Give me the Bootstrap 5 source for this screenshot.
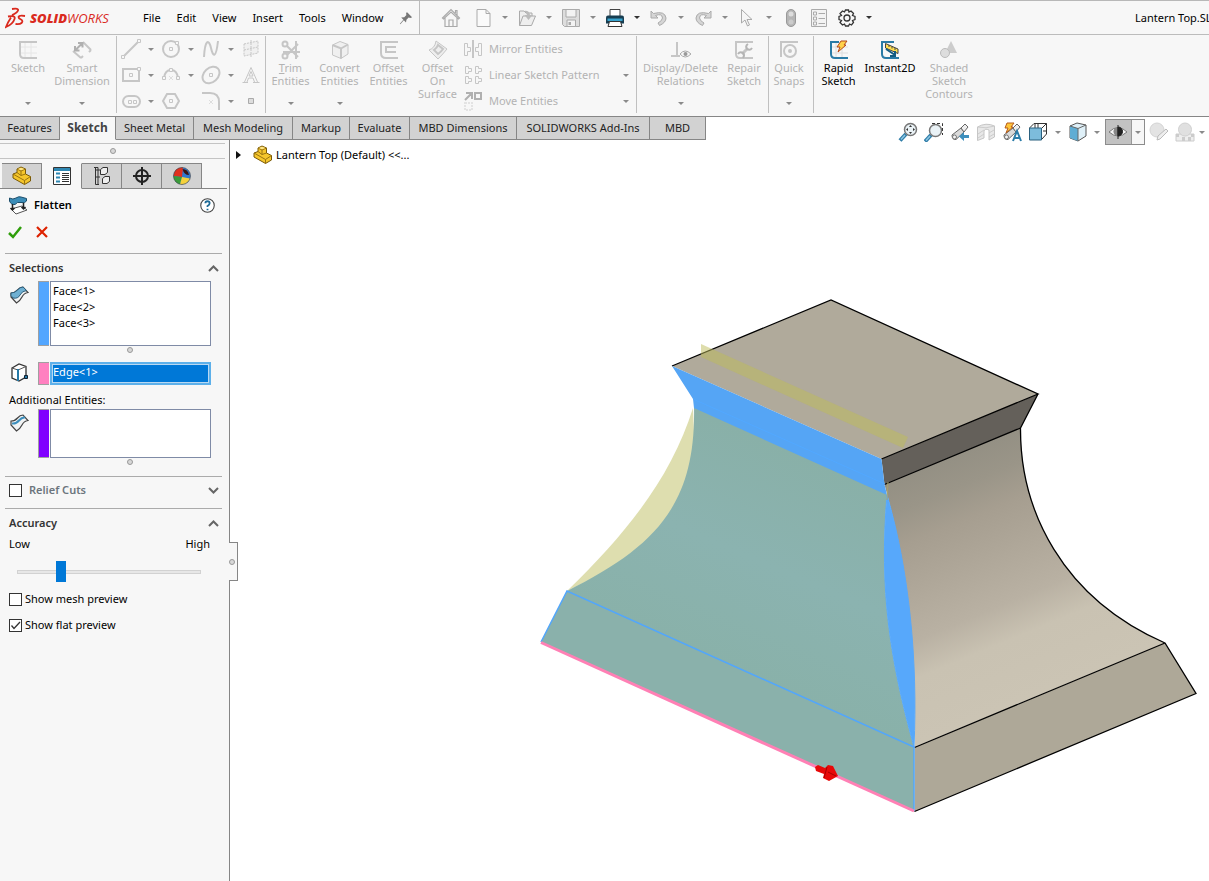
<!DOCTYPE html>
<html lang="en">
<head>
<meta charset="utf-8">
<meta name="viewport" content="width=device-width, initial-scale=1">
<title>SOLIDWORKS - Lantern Top</title>
<link href="https://cdn.jsdelivr.net/npm/bootstrap@5.3.0/dist/css/bootstrap.min.css" rel="stylesheet">
<style>
body{font-family:"Noto Sans","Open Sans",sans-serif;font-size:11px;line-height:16px;color:#000;background:#fff;overflow:hidden}
button{border:0;background:none;padding:0;color:inherit;line-height:inherit}
svg{display:block;flex:none}
.ico{width:20px;height:20px}
.chrome{background:#f7f7f7}
.titlebar{height:35px;border-top:1px solid #b8b8b8;border-bottom:1px solid #bcbcbc}
.brand{width:143px;padding-left:5px;color:#da2a1e}
.brand-name{font:italic 400 13px/16px "Open Sans",sans-serif}
.brand-name b{font-weight:800}
.menus{gap:16px}
.menus a{color:#000;text-decoration:none}
.pin{margin:0 6px 0 16px}
.quick{border-left:1px solid #bcbcbc;padding-left:21px}
.arrow{width:24px;height:20px;display:flex;align-items:center;justify-content:center;color:#8a8a8a;flex:none}
.arrow::after{content:"";border:3px solid transparent;border-top-color:currentColor;border-bottom:0}
.arrow.dark{color:#333}
.arrow.w20{width:20px}.arrow.w17{width:17px}.arrow.w14{width:14px}
.off{color:#b3b3b3}
.docname{width:74px;overflow:hidden;white-space:nowrap}
.ribbon{height:82px;border-bottom:1px solid #868686}
.group{border-right:1px solid #c0c0c0;margin-top:1px;margin-bottom:3px}
.group.first{padding:0 7px 0 1px}
.tool{display:flex;flex-direction:column;align-items:center;text-align:center;line-height:13px;padding-top:5px;width:49px;position:relative}
.group .tool{padding-top:4px}
.tool .ico{margin-bottom:1px}
.tool.w40{width:40px}.tool.w54{width:54px}.tool.w64{width:64px}.tool.w87{width:87px}
.tool.more::after{content:"";position:absolute;left:50%;bottom:8px;margin-left:-3px;border:3px solid transparent;border-top-color:#8a8a8a;border-bottom:0}
.sketchgrid{display:grid;grid-template-columns:repeat(3,40px) 24px;grid-auto-rows:26px;padding-left:4px}
.rowtools{width:174px;padding-left:1px}
.rowtools>div{height:26px}
.rowtools span{margin-left:6px}
.cmdtabs{display:grid;grid-template-columns:60px 56px 78px 99px 57px 60px 107px 133px 56px;height:23px}
.cmdtabs button{background:#d2d2d2;border-right:1px solid #868686;border-bottom:1px solid #868686;white-space:nowrap;color:#222}
.cmdtabs button.active{background:#f7f7f7;border-bottom-color:#f7f7f7;font-weight:700;font-size:12px;color:#444}
.viewtools{height:23px;overflow:visible;padding-top:1px}
.viewtools .ico{margin-right:6px}
.viewtools .tight .ico{margin-right:0}
.eye{border:1px solid #8c8c8c;background:#c2c2c2;height:26px;width:40px;flex:none;margin-top:1px}
.eye .ico{margin:0 3px 0 2px}
.eye .arrow{background:#f7f7f7;height:24px;width:13px;border-left:1px solid #999}
.side{width:230px;border-right:1px solid #868686;position:relative;flex:none}
.grip{height:16px;border-top:1px solid #c4c4c4;border-bottom:1px solid #c4c4c4;margin:3px 4px 0 0}
.dot{width:6px;height:6px;border:1px solid #999;border-radius:50%;background:#d8d8d8;display:block}
.ptabs{border-bottom:1px solid #868686;padding:4px 0 0 2px;margin-right:2px;height:30px}
.ptabs button{width:40px;height:26px;background:#d2d2d2;border:1px solid #868686;border-left:0;display:flex;align-items:center;justify-content:center}
.ptabs button.active{background:#f7f7f7;border-top-color:#f7f7f7;border-bottom-color:#f7f7f7}
.feature-title{padding:6px 14px 0 8px;gap:6px}
.confirm{padding:7px 0 11px 8px;gap:14px}
.sect{border-top:1px solid #ababab;margin:0 7px 0 5px;padding:1px 0 0 4px}
.sect.slim{padding:0 0 5px 4px}
.sect h2{font-size:11px;font-weight:600;margin:0;line-height:16px;color:#333}
.head{padding-right:3px;height:26px;gap:7px}
.pick{display:grid;grid-template-columns:29px 12px 161px}
.swatch{border:1px solid #a0a0a0;border-right:0;margin-right:1px}
.sw-blue{background:#52a6ff}.sw-pink{background:#ff80c0}.sw-violet{background:#8000ff}
.pickbox{border:1px solid #7f8ba6;background:#fff;padding:1px 2px}
.tall{height:65px}.mid{height:49px}
.pickbox.sel{border:2px solid #5db0ea;background:#0078d7;color:#fff;height:23px;padding:0 1px;outline:1px solid #b9d8f2;outline-offset:-3px}
.dotrow{display:flex;justify-content:center;padding-left:29px;height:8px;padding-top:1px}
.extra{padding:7px 0 1px}
.selections{padding-bottom:10px}
.tick{appearance:none;width:13px;height:13px;border:1px solid #333;background:#fff;margin:0;flex:none;border-radius:0}
.tick:checked{background:#fff url("data:image/svg+xml,%3Csvg xmlns='http://www.w3.org/2000/svg' viewBox='0 0 11 11'%3E%3Cpath d='M1.5 5.5 4 8.500 10 2' fill='none' stroke='%23333' stroke-width='1.300'/%3E%3C/svg%3E")}
.checks{display:grid;gap:10px}
.checks>div{gap:3px}
.accuracy{appearance:none;width:184px;height:22px;background:none;margin:9px 0 8px 8px;display:block}
.accuracy::-webkit-slider-runnable-track{height:4px;background:#e7e7e7;border:1px solid #d2d2d2}
.accuracy::-webkit-slider-thumb{appearance:none;width:10px;height:21px;margin-top:-10px;background:#0078d7}
.handle{position:absolute;right:-9px;top:402px;width:9px;height:39px;background:#f7f7f7;border:1px solid #868686;border-left:0;display:flex;align-items:center}
.stage{position:relative;min-width:0;min-height:741px}
.stage>svg{width:100%;height:100%;position:absolute}
.tree{position:absolute;left:6px;top:5px;z-index:1}
.tree .ico{margin:0 3px 0 12px}
.sk{fill:none;stroke:#c6c6c6;stroke-width:2}
.thin{stroke-width:1}
</style>
</head>
<body class="d-flex flex-column min-vh-100">
<svg width="0" height="0" class="position-absolute" aria-hidden="true">
<symbol id="part" viewBox="0 0 20 20"><path d="M1 8 5 6.500V3L9 1 13.500 3V8L18.500 10.500V15L12.500 18.500 1 12Z" fill="#f5c62c" stroke="#7a5a08"/><path d="M5 3 9 5 13.500 3M9 5V9.500L5 6.500M1 8 12.500 14.500 18.500 10.500M12.500 14.500V18.500M9 9.500 13.500 8" fill="none" stroke="#9a7410"/><path d="M6 3 9 1.700 12.300 3 9 4.300Z" fill="#ffe78c"/></symbol>
<symbol id="mag" viewBox="0 0 20 20"><path d="M2 18.500 8 12" stroke="#2f7da8" stroke-width="4"/><path d="M3 17.500 7 13" stroke="#8cc6e4" stroke-width="1.500"/><circle cx="12.500" cy="7.500" r="6" fill="#eaf2f6" stroke="#777" stroke-width="1.500"/></symbol>
<symbol id="scope" viewBox="0 0 20 20"><path d="M2 13 11 6 14 10 6 17.500Q2 18 2 13Z" fill="#dadada" stroke="#666"/><path d="M11 6 15 2 18 5 14 10Z" fill="#eee" stroke="#666"/><circle cx="4.500" cy="15" r="2" fill="#f5f5f5" stroke="#777"/></symbol>
<symbol id="surf" viewBox="0 0 20 20"><path d="M2 8Q6 8 8.500 5T14 2L19 7.500Q15 8 13 12T7.500 18L2 12Z" fill="#f1f3f4" stroke="#444" stroke-width="1.200"/></symbol>
</svg>

<header class="titlebar chrome d-flex align-items-center">
 <div class="brand d-flex align-items-center">
  <svg width="21" height="22" viewBox="0 0 21 22" fill="none" stroke="#da2a1e" stroke-width="1.800"><path d="M7 2Q14 1 13 3.500Q12 6 7 8M3 9.500Q11 8 9.500 12Q8 17 1 20Q3 15 6 10.500M20 9Q14 8 13.500 10Q13.500 11.500 16 12.500Q18.500 14 16.500 16Q15 17.500 10.500 17"/></svg>
  <span class="brand-name ms-1"><b>SOLID</b>WORKS</span>
 </div>
 <nav class="menus d-flex align-items-center"><a href="#">File</a><a href="#">Edit</a><a href="#">View</a><a href="#">Insert</a><a href="#">Tools</a><a href="#">Window</a></nav>
 <button class="pin" aria-label="Pin menu"><svg width="14" height="16" viewBox="0 0 16 16"><path d="M9 1 15 7 13 8 11 7.500 8.500 10 8 13 5.500 10.500 1.500 15 1 14.500 5 10 2.500 7.500 6 7 8.500 4.500 8 3Z" fill="#777"/></svg></button>
 <div class="quick align-self-stretch d-flex align-items-center">
  <button aria-label="Home"><svg class="ico" viewBox="0 0 20 20"><path d="M1.500 10 10 1.500 18.500 10 17.500 11 10 4 2.500 11ZM4 10V18.500H16V10M8 18V12H12V18M14.500 5V2.500H16V7" fill="none" stroke="#aaa" stroke-width="1.200"/></svg></button>
  <button class="ms-2 ps-1" aria-label="New"><svg class="ico" viewBox="0 0 20 20"><path d="M4 1.500H13L17 5.500V18.500H4ZM13 1.500V5.500H17" fill="#fafafa" stroke="#aaa"/></svg></button><button class="arrow" aria-label="New options"></button>
  <button aria-label="Open"><svg class="ico" viewBox="0 0 20 20"><path d="M2.500 17.500V3H7L9 5H15V8M2.500 17.500 6 8H18.500L14.500 17.500Z" fill="#eee" stroke="#aaa"/><path d="M7 3Q12 2 13 7H15.500L11.500 12 7.500 7H10Q10 5 7 3Z" fill="#bbb"/></svg></button><button class="arrow" aria-label="Open options"></button>
  <button aria-label="Save"><svg class="ico" viewBox="0 0 20 20"><path d="M1.500 1.500H18.500V18.500H3.500L1.500 16.500Z" fill="#ddd" stroke="#aaa"/><path d="M5 1.500H15V9H5ZM6 12H14.500V18.500H6Z" fill="#f3f3f3" stroke="#aaa"/><path d="M7.500 14H10V17H7.500Z" fill="#aaa"/></svg></button><button class="arrow" aria-label="Save options"></button>
  <button aria-label="Print"><svg class="ico" viewBox="0 0 20 20"><path d="M5 8V1.500H15V8" fill="#fff" stroke="#444"/><path d="M1 9.500Q1 7.500 3 7.500H17Q19 7.500 19 9.500V15.500H1Z" fill="#173d50"/><path d="M2.500 10.500H17.500V13H2.500Z" fill="#39a3cd"/><path d="M4.500 13.500H15.500L17 18.500H3Z" fill="#fff" stroke="#333"/></svg></button><button class="arrow dark" aria-label="Print options"></button>
  <button aria-label="Undo"><svg class="ico" viewBox="0 0 20 20"><path d="M2 3V10H9L6.500 7.500Q13 5 13.500 10Q13 13 9 15L10.500 17.500Q17 14.500 17 10Q16 2.500 4.500 5.500Z" fill="#d5d5d5" stroke="#aaa"/></svg></button><button class="arrow" aria-label="Undo options"></button>
  <button aria-label="Redo"><svg class="ico" viewBox="0 0 20 20"><path d="M18 3V10H11L13.500 7.500Q7 5 6.500 10Q7 13 11 15L9.500 17.500Q3 14.500 3 10Q4 2.500 15.500 5.500Z" fill="#d5d5d5" stroke="#aaa"/></svg></button><button class="arrow" aria-label="Redo options"></button>
  <button aria-label="Select"><svg class="ico" viewBox="0 0 20 20"><path d="M4.500 1.500V15L8 12 10.500 18 12.500 17 10 11.500H15Z" fill="#f5f5f5" stroke="#aaa"/></svg></button><button class="arrow" aria-label="Select options"></button>
  <button aria-label="Rebuild"><svg class="ico" viewBox="0 0 20 20"><rect x="5.500" y="1.500" width="9" height="17" rx="4.500" fill="#b5b5b5" stroke="#999"/><circle cx="10" cy="6" r="2.500" fill="#ddd"/><circle cx="10" cy="14" r="2.500" fill="#ccc"/></svg></button>
  <button class="mx-1 px-1" aria-label="File properties"><svg class="ico" viewBox="0 0 20 20"><path d="M2.500 1.500H17.500V18.500H2.500ZM4.500 4H7.500V7H4.500ZM4.500 9H7.500V12H4.500ZM4.500 14H7.500V17H4.500ZM9.500 5.500H16M9.500 10.500H16M9.500 15.500H16" fill="#f3f3f3" stroke="#aaa"/></svg></button>
  <button aria-label="Options"><svg class="ico" viewBox="0 0 20 20" fill="none" stroke="#333" stroke-width="1.300"><path d="M8.500 2H11.500L12 4 14 3 16.500 5.500 15.500 7.500 18 8.500V11.500L15.500 12.500 16.500 14.500 14.500 17 12.500 16 11.500 18H8.500L7.500 16 5.500 17 3 14.500 4.500 12.500 2 11.500V8.500L4.500 7.500 3 5.500 5.500 3 7.500 4Z"/><circle cx="10" cy="10" r="3"/></svg></button><button class="arrow dark" aria-label="Options menu"></button>
 </div>
 <div class="docname ms-auto">Lantern Top.SL</div>
</header>

<div class="ribbon chrome d-flex">
 <div class="group first d-flex off">
  <button class="tool more w54"><svg class="ico sk" viewBox="0 0 20 20"><path class="thin" stroke="#e6e6e6" d="M7 2V18M13 2V18M3 7H19M3 13H19"/><path d="M19 2H2V14Q2 18 6 18H19"/></svg>Sketch</button>
  <button class="tool more w54"><svg class="ico sk" viewBox="0 0 20 20"><path d="M1 11 9 18M11 2 19 10M9 18 11 16M19 10 17 12"/><path stroke="#b0b0b0" d="M3 10.500 10.500 3M6 3H10.500V7.500M3 6V10.500H7.500"/></svg>Smart Dimension</button>
 </div>
 <div class="group sketchgrid off">
  <div class="d-flex align-items-center"><button aria-label="Line"><svg class="ico sk" viewBox="0 0 20 20"><path d="M3 17 17 3"/><path class="thin" fill="#f7f7f7" d="M.5 16.500H3.500V19.500H.5ZM16.500.5H19.500V3.500H16.500Z"/></svg></button><button class="arrow w20" aria-label="Line options"></button></div>
  <div class="d-flex align-items-center"><button aria-label="Circle"><svg class="ico sk" viewBox="0 0 20 20"><circle cx="10" cy="10" r="8"/><path class="thin" fill="#f7f7f7" d="M8.500 8.500H11.500V11.500H8.500ZM14.500 2.500H17.500V5.500H14.500Z"/></svg></button><button class="arrow w20" aria-label="Circle options"></button></div>
  <div class="d-flex align-items-center"><button aria-label="Spline"><svg class="ico sk" viewBox="0 0 20 20"><path d="M3 18C4 0 8 0 10 9S15 20 17 2"/></svg></button><button class="arrow w20" aria-label="Spline options"></button></div>
  <div class="d-flex align-items-center"><button aria-label="Plane"><svg class="ico sk" viewBox="0 0 20 20" stroke-dasharray="2 1"><path class="thin" fill="#f0f0f0" d="M3 5 17 2V14L3 17ZM10 1V18M3 11 17 8"/></svg></button></div>
  <div class="d-flex align-items-center"><button aria-label="Rectangle"><svg class="ico sk" viewBox="0 0 20 20"><path d="M2 4H18V16H2Z"/><path class="thin" fill="#f7f7f7" d="M8.500 8.500H11.500V11.500H8.500ZM16.500 2.500H19.500V5.500H16.500Z"/></svg></button><button class="arrow w20" aria-label="Rectangle options"></button></div>
  <div class="d-flex align-items-center"><button aria-label="Arc"><svg class="ico sk" viewBox="0 0 20 20"><path d="M3 13Q4 5 10 5T17 13"/><path class="thin" fill="#f7f7f7" d="M1.500 11.500H4.500V14.500H1.500ZM8.500 3.500H11.500V6.500H8.500ZM15.500 11.500H18.500V14.500H15.500Z"/><path class="thin" stroke="#ddd" d="M8 11 12 15M12 11 8 15"/></svg></button><button class="arrow w20" aria-label="Arc options"></button></div>
  <div class="d-flex align-items-center"><button aria-label="Ellipse"><svg class="ico sk" viewBox="0 0 20 20"><ellipse cx="10" cy="10" rx="9.500" ry="7" transform="rotate(-42 10 10)"/><path class="thin" d="M8.500 8.500H11.500V11.500H8.500Z"/></svg></button><button class="arrow w20" aria-label="Ellipse options"></button></div>
  <div class="d-flex align-items-center"><button aria-label="Text"><svg class="ico sk" viewBox="0 0 20 20"><path class="thin" d="M1.500 17.500H7M12 17.500H18.500M3.500 17 10 2.500 16.500 17M6 17 7.500 13H12L13.500 17M8 11 10 6.500 12 11Z"/></svg></button></div>
  <div class="d-flex align-items-center"><button aria-label="Slot"><svg class="ico sk" viewBox="0 0 20 20"><rect x="2" y="5" width="17" height="11" rx="5.500"/><path class="thin" d="M7.500 9.500H10.500V12.500H7.500ZM12.500 9.500H15.500V12.500H12.500Z"/></svg></button><button class="arrow w20" aria-label="Slot options"></button></div>
  <div class="d-flex align-items-center"><button aria-label="Polygon"><svg class="ico sk" viewBox="0 0 20 20"><path d="M2 10 6 3H14L18 10 14 17H6Z"/><path class="thin" d="M8.500 8.500H11.500V11.500H8.500Z"/></svg></button></div>
  <div class="d-flex align-items-center"><button aria-label="Fillet"><svg class="ico sk" viewBox="0 0 20 20"><path d="M1 2H9Q18 2 18 11V19"/><path class="thin" stroke="#ddd" d="M8 9 12 13M12 9 8 13"/></svg></button><button class="arrow w20" aria-label="Fillet options"></button></div>
  <div class="d-flex align-items-center"><button aria-label="Point"><svg class="ico" viewBox="0 0 20 20"><path d="M7.500 7.500H12.500V12.500H7.500Z" fill="#ddd" stroke="#aaa"/></svg></button></div>
 </div>
 <div class="group d-flex off">
  <button class="tool more"><svg class="ico sk" viewBox="0 0 20 20"><path d="M6 6 17 17M6 15 17 4M2 12H19M15 1V19"/><circle cx="4" cy="4" r="2.500"/><circle cx="4" cy="16" r="2.500"/></svg><span><u>T</u>rim<br>Entities</span></button>
  <button class="tool more"><svg class="ico sk" viewBox="0 0 20 20"><path class="thin" fill="#f0f0f0" d="M2.500 5 10 1.500 18 4.500V14L11 18.500 2.500 15Z"/><path d="M2.500 5 11 8.500 18 4.500M11 8.500V18.500"/></svg>Convert Entities</button>
  <button class="tool"><svg class="ico sk" viewBox="0 0 20 20"><path d="M19 2H2V13Q2 18 7 18H19M17 7H7V12H17"/></svg>Offset Entities</button>
  <button class="tool"><svg class="ico sk" viewBox="0 0 20 20"><path class="thin" fill="#eee" d="M1 10Q7 8 8 1L19 9Q15 14 10 19Z"/><path d="M6 10Q9 8 10 5L15 9Q13 12 10 14Z"/></svg>Offset On Surface</button>
  <div class="rowtools">
   <div class="d-flex align-items-center"><svg class="ico sk" viewBox="0 0 20 20"><path d="M10 1V19"/><path class="thin" d="M1.500 4.500H4.500V8.500H7.500V12.500H4.500V16.500H1.500ZM18.500 4.500H15.500V8.500H12.500V12.500H15.500V16.500H18.500Z"/></svg><span>Mirror Entities</span></div>
   <div class="d-flex align-items-center"><svg class="ico sk" viewBox="0 0 20 20"><path class="thin" d="M2.500 1.500H5.500V3.500H8.500V6.500H5.500V8.500H2.500ZM12.500 1.500H15.500V3.500H18.500V6.500H15.500V8.500H12.500ZM2.500 11.500H5.500V13.500H8.500V16.500H5.500V18.500H2.500ZM12.500 11.500H15.500V13.500H18.500V16.500H15.500V18.500H12.500Z"/></svg><span>Linear Sketch Pattern</span><button class="arrow w20 ms-auto" aria-label="Pattern options"></button></div>
   <div class="d-flex align-items-center"><svg class="ico sk" viewBox="0 0 20 20"><path stroke="#b0b0b0" d="M2 9 8 3M3 2H9V8M12 2H18V8H12Z"/><path stroke="#e3e3e3" stroke-dasharray="2 1" d="M2 12H9V19H2Z"/></svg><span>Move Entities</span><button class="arrow w20 ms-auto" aria-label="Move options"></button></div>
  </div>
 </div>
 <div class="group d-flex off pe-1">
  <button class="tool more w87"><svg class="ico sk" viewBox="0 0 20 20"><path d="M6 2V16M0 16H9"/><path class="thin" stroke="#aaa" fill="#f7f7f7" d="M9 14Q14 8 20 14Q14 20 9 14Z"/><circle cx="14.500" cy="14" r="2" fill="#999" stroke="none"/></svg>Display/Delete Relations</button>
  <button class="tool w40"><svg class="ico sk" viewBox="0 0 20 20"><path d="M19 2H2V14Q2 18 6 18H19"/><path d="M8 14 14 8" stroke-width="3"/><path d="M14 4Q11 6 13 9Q16 11 18 8M9 18Q11 15 9 13Q6 11 4 14" stroke="#b5b5b5"/></svg>Repair Sketch</button>
 </div>
 <div class="group d-flex off pe-1">
  <button class="tool more w40"><svg class="ico sk" viewBox="0 0 20 20"><path d="M1 2H19M2 1V17"/><circle cx="11" cy="11" r="6"/><circle cx="11" cy="11" r="1"/></svg>Quick Snaps</button>
 </div>
 <div class="d-flex">
  <button class="tool"><svg class="ico sk" viewBox="0 0 20 20"><path class="thin" stroke="#ddd" d="M7 2V18M13 2V18M3 7H19M3 13H19"/><path stroke="#2a7ba6" d="M10 2H2V14Q2 18 6 18H19"/><path stroke="#b5481a" stroke-width="1" fill="#ffd24a" d="M12 1H18L15 5H17L9 12 11 7H8Z"/></svg>Rapid Sketch</button>
  <button class="tool w54"><svg class="ico sk" viewBox="0 0 20 20"><path stroke="#2a7ba6" d="M14 2H2V14Q2 18 6 18H19"/><path stroke="#444" stroke-width="1" fill="#ffdf50" d="M5.500 3.500 18 9V13.500L5.500 8ZM9 5V7M12 6.500V8.500M15 8V10"/><path stroke="#145c82" d="M6 9 15 15M15 11V16H10"/></svg>Instant2D</button>
  <button class="tool off w64"><svg class="ico" viewBox="0 0 20 20"><path d="M12 1 18 13H6Z" fill="#ccc"/><circle cx="6" cy="13" r="4.500" fill="#ddd" stroke="#bbb"/></svg>Shaded Sketch Contours</button>
 </div>
</div>

<div class="d-flex align-items-start justify-content-between">
 <div class="cmdtabs" role="tablist"><button>Features</button><button class="active">Sketch</button><button>Sheet Metal</button><button>Mesh Modeling</button><button>Markup</button><button>Evaluate</button><button>MBD Dimensions</button><button>SOLIDWORKS Add-Ins</button><button>MBD</button></div>
 <div class="viewtools d-flex">
  <button aria-label="Zoom to fit" class="align-self-start pt-1"><svg class="ico" viewBox="0 0 20 20"><use href="#mag"/><path d="M12.500 3 14 5H11ZM12.500 12 14 10H11ZM8 7.500 10 6V9ZM17 7.500 15 6V9Z" fill="#333"/></svg></button>
  <button aria-label="Zoom to area" class="align-self-start pt-1"><svg class="ico" viewBox="0 0 20 20"><path d="M8 1.500H18.500V13" fill="none" stroke="#333" stroke-dasharray="3 2"/><use href="#mag" x="-1" y="1"/></svg></button>
  <button aria-label="Previous view" class="align-self-start pt-1"><svg class="ico" viewBox="0 0 20 20"><use href="#scope"/><path d="M9 14.500 14 10V13H19V16H14V19Z" fill="#3d8fbd"/></svg></button>
  <button aria-label="Section view" class="align-self-start pt-1"><svg class="ico" viewBox="0 0 20 20"><path d="M1.500 5Q10 0 18.500 4V15L13 18V8Q9 6 8 9V16L1.500 18.500Z" fill="#e8e8e8" stroke="#c6c6c6"/><path d="M1.500 5Q10 7 18.500 4M2 12 8 8M2 16 8 12M13 11 18 8M13 15 18 12" fill="none" stroke="#ccc"/></svg></button>
  <button aria-label="Dynamic annotation views" class="align-self-start pt-1"><svg class="ico" viewBox="0 0 20 20"><use href="#scope"/><path d="M5 1H12L9 5H11L4 11 6 6H3Z" fill="#ffc63a" stroke="#b55a1a"/><path d="M11 19 15 9 19 19M12.500 16H18" fill="none" stroke="#2c7da9" stroke-width="2"/></svg></button>
  <span class="tight d-flex align-self-start pt-1"><button aria-label="View orientation"><svg class="ico" viewBox="0 0 20 20"><path d="M6 1.500H18.500V12L14 17M6 1.500 1.500 6M18.500 1.500 14 6M10 1V6M15 9H18M7 2V6" fill="none" stroke="#333"/><path d="M1.500 6H13.500V18H1.500Z" fill="#7dbcdc" stroke="#2b617f"/></svg></button><button class="arrow w20" aria-label="Orientation options"></button></span>
  <span class="tight d-flex align-self-start pt-1"><button aria-label="Display style"><svg class="ico" viewBox="0 0 20 20"><path d="M2 4 9 1 18 3V14L10 19 2 16Z" fill="#dff0f8" stroke="#555"/><path d="M2 4 10 6.500V19L2 16Z" fill="#5fadd4"/><path d="M2 4 10 6.500 18 3M10 6.500V19" fill="none" stroke="#666"/></svg></button><button class="arrow w17" aria-label="Style options"></button></span>
  <span class="eye d-flex align-items-center"><button aria-label="Hide/show items"><svg class="ico" viewBox="0 0 20 20"><path d="M1 10Q10 1 19 10Q10 18 1 10Z" fill="#f5f5f5" stroke="#777"/><circle cx="10" cy="9.500" r="4.500" fill="#888"/><path d="M10 3V17M10 5A4.500 4.500 0 0 1 10 14Z" fill="#222" stroke="#222"/></svg></button><button class="arrow" aria-label="Hide/show options"></button></span>
  <button aria-label="Edit appearance" class="align-self-start pt-1 ps-1"><svg class="ico" viewBox="0 0 20 20"><circle cx="8" cy="8" r="7" fill="#e3e3e3" stroke="#d4d4d4"/><path d="M8 18 9 14 17 7 19 9 11 17Z" fill="#eee" stroke="#bbb"/></svg></button>
  <span class="tight d-flex align-self-start pt-1"><button aria-label="Apply scene"><svg class="ico" viewBox="0 0 20 20"><path d="M1 12H19V19H1Z" fill="#eee" stroke="#ccc"/><path d="M1 12H4V15H1ZM7 15H10V19H7ZM16 12H19V15H16ZM13 15H16V19H13Z" fill="#ccc"/><circle cx="10" cy="7.500" r="6.500" fill="#e0e0e0" stroke="#d0d0d0"/></svg></button><button class="arrow w14" aria-label="Scene options"></button></span>
 </div>
</div>

<main class="d-flex flex-grow-1">
 <aside class="side chrome">
  <div class="grip d-flex justify-content-center align-items-center"><span class="dot"></span></div>
  <div class="ptabs d-flex">
   <button aria-label="Feature tree"><svg class="ico"><use href="#part"/></svg></button>
   <button class="active" aria-label="Properties"><svg class="ico" viewBox="0 0 20 20"><path d="M1.500 1.500H18.500V18.500H1.500Z" fill="#fff" stroke="#333"/><path d="M2 2H18V5H2Z" fill="#2f88b3"/><path d="M4 7.500H8M4 11.500H8M4 15.500H8" stroke="#2f88b3" stroke-width="2"/><path d="M10 7.500H17M10 9.500H17M10 11.500H17M10 13.500H17M10 15.500H17" stroke="#333"/></svg></button>
   <button aria-label="Configurations"><svg class="ico" viewBox="0 0 20 20" fill="#eee" stroke="#333"><path d="M3.500 1V18.500H7M3.500 4H8M3.500 11H8M2 1.500H6V18.500" fill="none"/><path d="M8.500 3.500 11 1.500H15.500V6.500L13 8.500H8.500ZM10.500 12.500 13 10.500H17.500V15.500L15 17.500H10.500Z"/></svg></button>
   <button aria-label="Dimensions"><svg class="ico" viewBox="0 0 20 20" fill="none" stroke="#222" stroke-width="2"><circle cx="10" cy="10" r="6"/><path d="M10 1V19M1 10H19"/></svg></button>
   <button aria-label="Appearances"><svg class="ico" viewBox="0 0 20 20"><circle cx="10" cy="10" r="8.500" fill="#3079d0"/><path d="M10 11 1.500 10A8.500 8.500 0 0 1 11 1.500Z" fill="#e0301e"/><path d="M10 11 1.500 10A8.500 8.500 0 0 0 8 18.300Z" fill="#3a9c3a"/><path d="M10 11 8 18.300A8.500 8.500 0 0 0 18 12.500Z" fill="#f5d23c"/><path d="M10.500 3Q16 3 17 9Q12 9 10.500 3Z" fill="#3a1515"/><circle cx="10" cy="10" r="8.500" fill="none" stroke="#444" stroke-width=".6"/></svg></button>
  </div>
  <div class="feature-title d-flex align-items-center">
   <svg class="ico" viewBox="0 0 20 20"><path d="M3 14 14 11 19 15 8 19Z" fill="#fff" stroke="#555"/><path d="M1.500 3Q5 5 8 3T13 2L18.500 3.500V6Q17 8.500 13 7.500T7 9.500Q3 10 1.500 6Z" fill="#3c8db8" stroke="#1c4e6b"/><path d="M4.500 9V15M2.500 13 4.500 15 6.500 13M15.500 8V14M13.500 12 15.500 14 17.500 12" stroke="#222" stroke-width="1.500" fill="none"/></svg>
   <strong class="fw-semibold">Flatten</strong>
   <button class="ms-auto" aria-label="Help"><svg width="15" height="15" viewBox="0 0 14 14" fill="none"><circle cx="7" cy="7" r="6.300" fill="#fff" stroke="#444"/><path d="M5 5Q5 3 7 3T9 5Q9 6.500 7 7.500V8.500M7 10V11.500" stroke="#1f6c98" stroke-width="1.700"/></svg></button>
  </div>
  <div class="confirm d-flex">
   <button aria-label="OK"><svg width="14" height="20" viewBox="0 0 14 20"><path d="M1 11 5 15 13 5" fill="none" stroke="#2f9e0b" stroke-width="2.500"/></svg></button>
   <button aria-label="Cancel"><svg width="12" height="20" viewBox="0 0 12 20"><path d="M1 5 11 15M11 5 1 15" fill="none" stroke="#dd2200" stroke-width="2.200"/></svg></button>
  </div>
  <section class="sect selections">
   <div class="head d-flex justify-content-between align-items-center"><h2>Selections</h2><svg width="11" height="7" viewBox="0 0 11 7" fill="none" stroke="#666" stroke-width="2"><path d="M1 6 5.500 1.500 10 6"/></svg></div>
   <div class="pick"><svg class="ico mt-1" viewBox="0 0 20 20"><use href="#surf"/><path d="M2 8Q6 8 8.500 5T14 2L17.500 5.500Q13 6 11 10T4 13L2 10.500Z" fill="#6fb0d2" stroke="#2c5f7d"/></svg><span class="swatch sw-blue"></span><div class="pickbox tall"><div>Face&lt;1&gt;</div><div>Face&lt;2&gt;</div><div>Face&lt;3&gt;</div></div></div>
   <div class="dotrow"><span class="dot"></span></div>
   <div class="pick mt-2"><svg class="ico" viewBox="0 0 20 20"><path d="M3 6 10 2 17 4.500V15L10 19 3 16Z" fill="#fff" stroke="#333" stroke-width="1.300"/><path d="M3 6 9 8 17 4.500" fill="none" stroke="#555"/><path d="M9 7V19" stroke="#2679a6" stroke-width="2"/><path d="M15.500 13.500H18.500V16.500H15.500Z" fill="#2679a6" stroke="#123"/></svg><span class="swatch sw-pink"></span><div class="pickbox sel">Edge&lt;1&gt;</div></div>
   <div class="extra">Additional Entities:</div>
   <div class="pick"><svg class="ico mt-1" viewBox="0 0 20 20"><use href="#surf"/><path d="M3 10.500Q7 11 10 7.500T16 4.500" fill="none" stroke="#3d8fbd" stroke-width="2"/></svg><span class="swatch sw-violet"></span><div class="pickbox mid"></div></div>
   <div class="dotrow"><span class="dot"></span></div>
  </section>
  <section class="sect slim">
   <div class="head d-flex align-items-center"><input class="tick" type="checkbox" id="relief"><label for="relief" class="fw-semibold text-secondary">Relief Cuts</label><svg class="ms-auto" width="11" height="7" viewBox="0 0 11 7" fill="none" stroke="#666" stroke-width="2"><path d="M1 1 5.500 5.500 10 1"/></svg></div>
  </section>
  <section class="sect">
   <div class="head d-flex justify-content-between align-items-center"><h2>Accuracy</h2><svg width="11" height="7" viewBox="0 0 11 7" fill="none" stroke="#666" stroke-width="2"><path d="M1 6 5.500 1.500 10 6"/></svg></div>
   <div class="d-flex justify-content-between pe-2"><label for="acc">Low</label><span class="pe-1">High</span></div>
   <input id="acc" class="accuracy" type="range" min="0" max="100" value="22">
   <div class="checks">
    <div class="d-flex align-items-center"><input class="tick" type="checkbox" id="mesh"><label for="mesh">Show mesh preview</label></div>
    <div class="d-flex align-items-center"><input class="tick" type="checkbox" id="flat" checked><label for="flat">Show flat preview</label></div>
   </div>
  </section>
  <div class="handle"><span class="dot"></span></div>
 </aside>
 <div class="stage flex-grow-1">
  <div class="tree d-flex align-items-center"><svg width="5" height="8" viewBox="0 0 5 8"><path d="M0 0 5 4 0 8Z" fill="#111"/></svg><svg class="ico"><use href="#part"/></svg><span>Lantern Top (Default) &lt;&lt;...</span></div>
  <svg viewBox="230 140 979 741" preserveAspectRatio="xMinYMin meet" role="img" aria-label="Lantern top model">
   <defs><linearGradient id="shade" gradientUnits="userSpaceOnUse" x1="885" y1="485" x2="981" y2="717"><stop offset="0" stop-color="#949084"/><stop offset=".12" stop-color="#9a9588"/><stop offset=".25" stop-color="#a69e90"/><stop offset=".62" stop-color="#b9b1a3"/><stop offset=".76" stop-color="#c9c2b2"/><stop offset="1" stop-color="#cbc4b4"/></linearGradient>
   <linearGradient id="teal" gradientUnits="userSpaceOnUse" x1="790" y1="450" x2="700" y2="660"><stop offset="0" stop-color="#89b0a8"/><stop offset=".5" stop-color="#8bb3b0"/><stop offset="1" stop-color="#89b1a9"/></linearGradient></defs>
   <path d="M693 408C672 475 630 530 567 591L660 545 697 500Z" fill="#dedeaf"/>
   <path d="M1020.500 428C1020 510 1062 598 1165 643L914.500 747C917 640 905 560 884.500 484.500Z" fill="url(#shade)"/>
   <path d="M914.500 747.500 1165 643 1196 693.500 914.500 811.500Z" fill="#aea898"/>
   <path d="M881.500 459 1038 394 1020.500 428 884.500 484.500Z" fill="#64605a"/>
   <path d="M831 300 1038 394 881.500 459 672 366Z" fill="#b0aa9b"/>
   <path d="M672 366 831 300 1038 394 881.500 459M1038 394 1020.500 428 884.500 484.500M1020.500 428C1020 510 1062 598 1165 643L1196 693.500 914.500 811.500M1165 643 914.500 747.500" fill="none" stroke="#000" stroke-width="1.300"/>
   <path d="M567 591 914 747V811L541 642Z" fill="#8ab1ab"/>
   <path d="M694 407C696 505 655 547 567 591L914 747C890 660 879 590 887 495L885 492Z" fill="url(#teal)"/>
   <path d="M887 495C879 590 890 660 914 747C918 660 909 570 887 495Z" fill="#57a8fb" stroke="#57a8fb"/>
   <path d="M672 366 881.500 459 884.500 484.500 887 495 694 408 693 399Z" fill="#55a5f5"/>
   <path d="M693 399 885 484" stroke="#52a8ff"/>
   <path d="M541 642 567 591 914 747V811" fill="none" stroke="#52a6fb" stroke-width="1.500"/>
   <path d="M888 482 887 500" stroke="#aaa36a"/>
   <path d="M701 344 908 437 903 448 701 357Z" fill="#bdbb5a" opacity=".5"/>
   <path d="M541 642.500 914 811" stroke="#ff80b5" stroke-width="3"/>
   <path d="M815 767 818 765 825 768 828 765 833 766 838 776 829 781 823 778 824 774 816 771Z" fill="#e80808"/><path d="M827 767 824 778M828 772 836 776" stroke="#a80000"/>
  </svg>
 </div>
</main>
<script src="https://cdn.jsdelivr.net/npm/bootstrap@5.3.0/dist/js/bootstrap.bundle.min.js"></script>
</body>
</html>
